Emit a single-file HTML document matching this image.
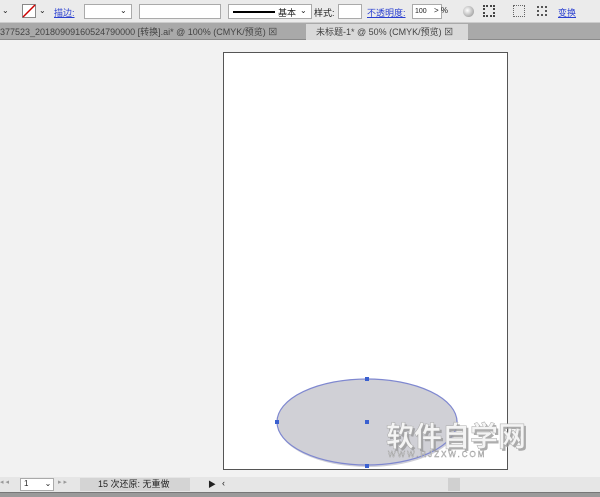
<!DOCTYPE html>
<html><head><meta charset="utf-8"><style>
*{margin:0;padding:0;box-sizing:border-box}
body{width:600px;height:497px;overflow:hidden;background:#f2f2f2;font-family:"Liberation Sans","Noto Sans CJK SC",sans-serif;font-size:9px;color:#222;position:relative}
.a{position:absolute}
.tb{top:0;left:0;width:600px;height:23px;background:#ebebeb;border-bottom:1px solid #ccc}
.box{background:#fff;border:1px solid #aaa;height:15px;top:4px}
.lnk{color:#2a3fd0;text-decoration:underline}
.tabs{top:23px;left:0;width:600px;height:17px;background:#a9a9a9;border-bottom:1px solid #8a8a8a}
.tab{top:24px;height:16px;line-height:16px;font-size:9px;color:#444;white-space:nowrap}
</style></head><body>
<div class="a tb"></div>
<div class="a" style="left:2px;top:6px;font-size:8px">⌄</div>
<div class="a" style="left:22px;top:4px;width:14px;height:14px;border:1px solid #888;background:#fff"></div>
<svg class="a" style="left:22px;top:4px" width="14" height="14"><line x1="1" y1="13" x2="13" y2="1" stroke="#c00" stroke-width="1.5"/></svg>
<div class="a" style="left:39px;top:6px;font-size:8px">⌄</div>
<div class="a lnk" style="left:54px;top:6px">描边:</div>
<div class="a box" style="left:84px;width:48px"></div>
<div class="a" style="left:120px;top:6px;font-size:8px">⌄</div>
<div class="a box" style="left:139px;width:82px"></div>
<div class="a box" style="left:228px;width:84px"></div>
<div class="a" style="left:233px;top:11px;width:42px;height:2px;background:#000"></div>
<div class="a" style="left:278px;top:6px">基本</div>
<div class="a" style="left:300px;top:6px;font-size:8px">⌄</div>
<div class="a" style="left:314px;top:6px">样式:</div>
<div class="a box" style="left:338px;width:24px"></div>
<div class="a lnk" style="left:367px;top:6px">不透明度:</div>
<div class="a box" style="left:412px;width:30px;font-size:7px;line-height:13px;padding-left:2px">100</div>
<div class="a" style="left:434px;top:6px;font-size:8px">&gt; %</div>
<div class="a" style="left:463px;top:6px;width:11px;height:11px;border-radius:50%;background:radial-gradient(circle at 40% 40%,#fff,#888)"></div>
<div class="a" style="left:483px;top:5px;width:12px;height:12px;border:2px dotted #444"></div>
<div class="a" style="left:513px;top:5px;width:12px;height:12px;border:1px dotted #666"></div>
<div class="a" style="left:537px;top:6px;width:10px;height:10px;border:2px dotted #555"></div>
<div class="a lnk" style="left:558px;top:6px">变换</div>
<div class="a tabs"></div>
<div class="a tab" style="left:0;width:305px">377523_20180909160524790000 [转换].ai* @ 100% (CMYK/预览) ⊠</div>
<div class="a tab" style="left:306px;width:162px;background:#d9d9d9;padding-left:10px">未标题-1* @ 50% (CMYK/预览) ⊠</div>
<div class="a" style="left:223px;top:52px;width:285px;height:418px;background:#fff;border:1px solid #555"></div>
<svg class="a" style="left:0;top:0" width="600" height="497">
<ellipse cx="368" cy="424" rx="90" ry="43" fill="#a0a0b0" opacity=".5"/>
<ellipse cx="367" cy="422" rx="90" ry="43" fill="#d0d0d6" stroke="#7f88d0" stroke-width="1.2"/>
<g fill="#3a60d0"><rect x="365" y="377" width="4" height="4"/><rect x="275" y="420" width="4" height="4"/><rect x="365" y="420" width="4" height="4"/><rect x="365" y="464" width="4" height="4"/></g>
<text x="387" y="447" font-size="28" font-family="Noto Sans CJK SC" font-weight="bold" fill="#999" opacity=".8" transform="translate(1,1)">软件自学网</text>
<text x="386" y="446" font-size="28" font-family="Noto Sans CJK SC" font-weight="bold" fill="#f4f4f4" stroke="#aaa" stroke-width=".5">软件自学网</text>
<text x="388" y="457" font-size="8" fill="#eee" stroke="#999" stroke-width=".4" letter-spacing="2">WWW.RJZXW.COM</text>
</svg>
<div class="a" style="left:0;top:477px;width:600px;height:15px;background:#e6e6e6"></div>
<div class="a" style="left:0;top:478px;font-size:7px;color:#999">◂ ◂</div>
<div class="a" style="left:20px;top:478px;width:34px;height:13px;background:#fff;border:1px solid #aaa;font-size:8px;padding-left:3px">1 <span style="margin-left:14px">⌄</span></div>
<div class="a" style="left:58px;top:478px;font-size:7px;color:#999">▸ ▸</div>
<div class="a" style="left:80px;top:478px;width:110px;height:13px;background:#d4d4d4;font-size:9px;padding-left:18px;line-height:13px">15 次还原: 无重做</div>
<div class="a" style="left:208px;top:479px;font-size:8px">▶</div>
<div class="a" style="left:222px;top:478px;font-size:9px">‹</div>
<div class="a" style="left:448px;top:478px;width:12px;height:13px;background:#d0d0d0"></div>
<div class="a" style="left:0;top:492px;width:600px;height:5px;background:#9a9a9a;border-top:1px solid #777"></div>
</body></html>
